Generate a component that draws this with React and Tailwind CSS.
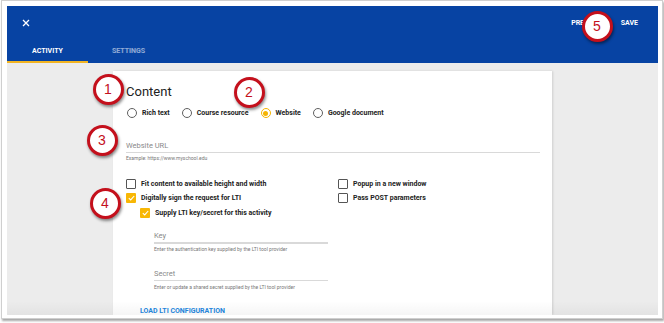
import React from "react";

function Marker({ n, x, y }) {
  return (
    <div
      className="absolute w-[31px] h-[31px] rounded-full bg-white border-[3px] border-[#c4101c] flex items-center justify-center text-[#c4101c] text-[14px] leading-none shadow-[1px_2px_3px_rgba(0,0,0,0.45)]"
      style={{ left: x - 15.5, top: y - 15.5, fontFamily: '"Liberation Sans", Arial, sans-serif' }}
    >
      {n}
    </div>
  );
}

function Radio({ checked, label }) {
  return (
    <div className="flex items-center gap-[5px]">
      {checked ? (
        <div className="w-[10px] h-[10px] rounded-full border border-[#f5b400] flex items-center justify-center">
          <div className="w-[5px] h-[5px] rounded-full bg-[#f5b400]" />
        </div>
      ) : (
        <div className="w-[10px] h-[10px] rounded-full border border-[#5f5f5f]" />
      )}
      <span className="text-[7px] font-bold text-[#222]">{label}</span>
    </div>
  );
}

function Check({ checked, label }) {
  return (
    <div className="flex items-center gap-[5px] h-[14px]">
      {checked ? (
        <div className="w-[10px] h-[10px] rounded-[1px] bg-[#f8b705] flex items-center justify-center">
          <svg width="7" height="6" viewBox="0 0 7 6">
            <path d="M0.8 3.2 L2.7 4.9 L6.2 1" fill="none" stroke="white" strokeWidth="1.1" />
          </svg>
        </div>
      ) : (
        <div className="w-[10px] h-[10px] rounded-[1px] border border-[#555]" />
      )}
      <span className="text-[7px] font-bold text-[#222]">{label}</span>
    </div>
  );
}

export default function App() {
  return (
    <div
      className="w-[664px] h-[323px] bg-white relative overflow-hidden"
      style={{ fontFamily: "Roboto, 'Liberation Sans', sans-serif" }}
    >
      <div className="w-[662px] h-[319px] ml-[1px] border border-[#cfcfcf] bg-white pl-[5px] pt-[5px] pr-[4px] pb-[3px] shadow-[1px_2px_2px_rgba(0,0,0,0.35)] flex flex-col">
        {/* header */}
        <div className="bg-[#0743a3] h-[57px] flex flex-col shrink-0">
          <div className="h-[34px] flex items-center justify-between pl-[15px] pr-[20px]">
            <svg width="8" height="8" viewBox="0 0 8 8">
              <path d="M1 1 L7 7 M7 1 L1 7" stroke="white" strokeWidth="1.3" />
            </svg>
            <div className="flex items-center gap-[20px] text-[7px] font-bold text-white">
              <span>PREVIEW</span>
              <span>SAVE</span>
            </div>
          </div>
          <div className="flex h-[23px]">
            <div className="w-[81px] flex items-center justify-center border-b-2 border-[#f2b422] text-[7px] font-bold text-white pt-[1px]">
              ACTIVITY
            </div>
            <div className="w-[81px] flex items-center justify-center border-b-2 border-transparent text-[7px] font-bold text-white/55 pt-[1px]">
              SETTINGS
            </div>
          </div>
        </div>
        {/* body */}
        <div className="flex-1 bg-[#ececec] pl-[106px] pt-[8px] relative overflow-hidden">
          <div className="w-[439px] h-full bg-white shadow-[1px_0_2px_rgba(0,0,0,0.12)] pl-[13px] pr-[12px] flex flex-col">
            <div className="h-[16px] mt-[13px] flex items-center text-[13px] text-[#222]">Content</div>
            <div className="h-[12px] mt-[8px] flex items-center gap-[12px] pl-[1px]">
              <Radio label="Rich text" />
              <Radio label="Course resource" />
              <Radio checked label="Website" />
              <Radio label="Google document" />
            </div>
            <div className="mt-[22px] h-[10px] flex items-center text-[7.5px] text-[#8a8a8a]">Website URL</div>
            <div className="h-[1.5px] bg-[#d9d9d9] mt-[1px] mr-[0px]" />
            <div className="h-[7px] mt-[3px] flex items-center text-[5px] text-[#777]">Example: https://www.myschool.edu</div>
            <div className="mt-[15px] flex">
              <div className="w-[212px] flex flex-col">
                <Check label="Fit content to available height and width" />
                <Check checked label="Digitally sign the request for LTI" />
                <div className="pl-[14px] mt-[1px]">
                  <Check checked label="Supply LTI key/secret for this activity" />
                </div>
              </div>
              <div className="flex flex-col">
                <Check label="Popup in a new window" />
                <Check label="Pass POST parameters" />
              </div>
            </div>
            <div className="pl-[28px] w-[202px] flex flex-col">
              <div className="mt-[11px] h-[10px] flex items-center text-[7.5px] text-[#8a8a8a]">Key</div>
              <div className="h-[1.5px] bg-[#d9d9d9] mt-[1px]" />
              <div className="h-[7px] mt-[3px] flex items-center text-[5px] text-[#777]">Enter the authentication key supplied by the LTI tool provider</div>
              <div className="mt-[15px] h-[10px] flex items-center text-[7.5px] text-[#8a8a8a]">Secret</div>
              <div className="h-[1.5px] bg-[#d9d9d9] mt-[1px]" />
              <div className="h-[7px] mt-[3px] flex items-center text-[5px] text-[#777]">Enter or update a shared secret supplied by the LTI tool provider</div>
            </div>
            <div className="pl-[14px] mt-[16px] h-[8px] flex items-center text-[7px] font-bold text-[#2487e0]">LOAD LTI CONFIGURATION</div>
          </div>
          <div className="absolute left-0 right-0 bottom-0 h-[14px] bg-gradient-to-b from-transparent to-[rgba(0,0,0,0.04)]" />
        </div>
      </div>
      <Marker n="1" x={108} y={89} />
      <Marker n="2" x={249} y={92} />
      <Marker n="3" x={102} y={140} />
      <Marker n="4" x={105} y={203} />
      <Marker n="5" x={597} y={26} />
    </div>
  );
}
